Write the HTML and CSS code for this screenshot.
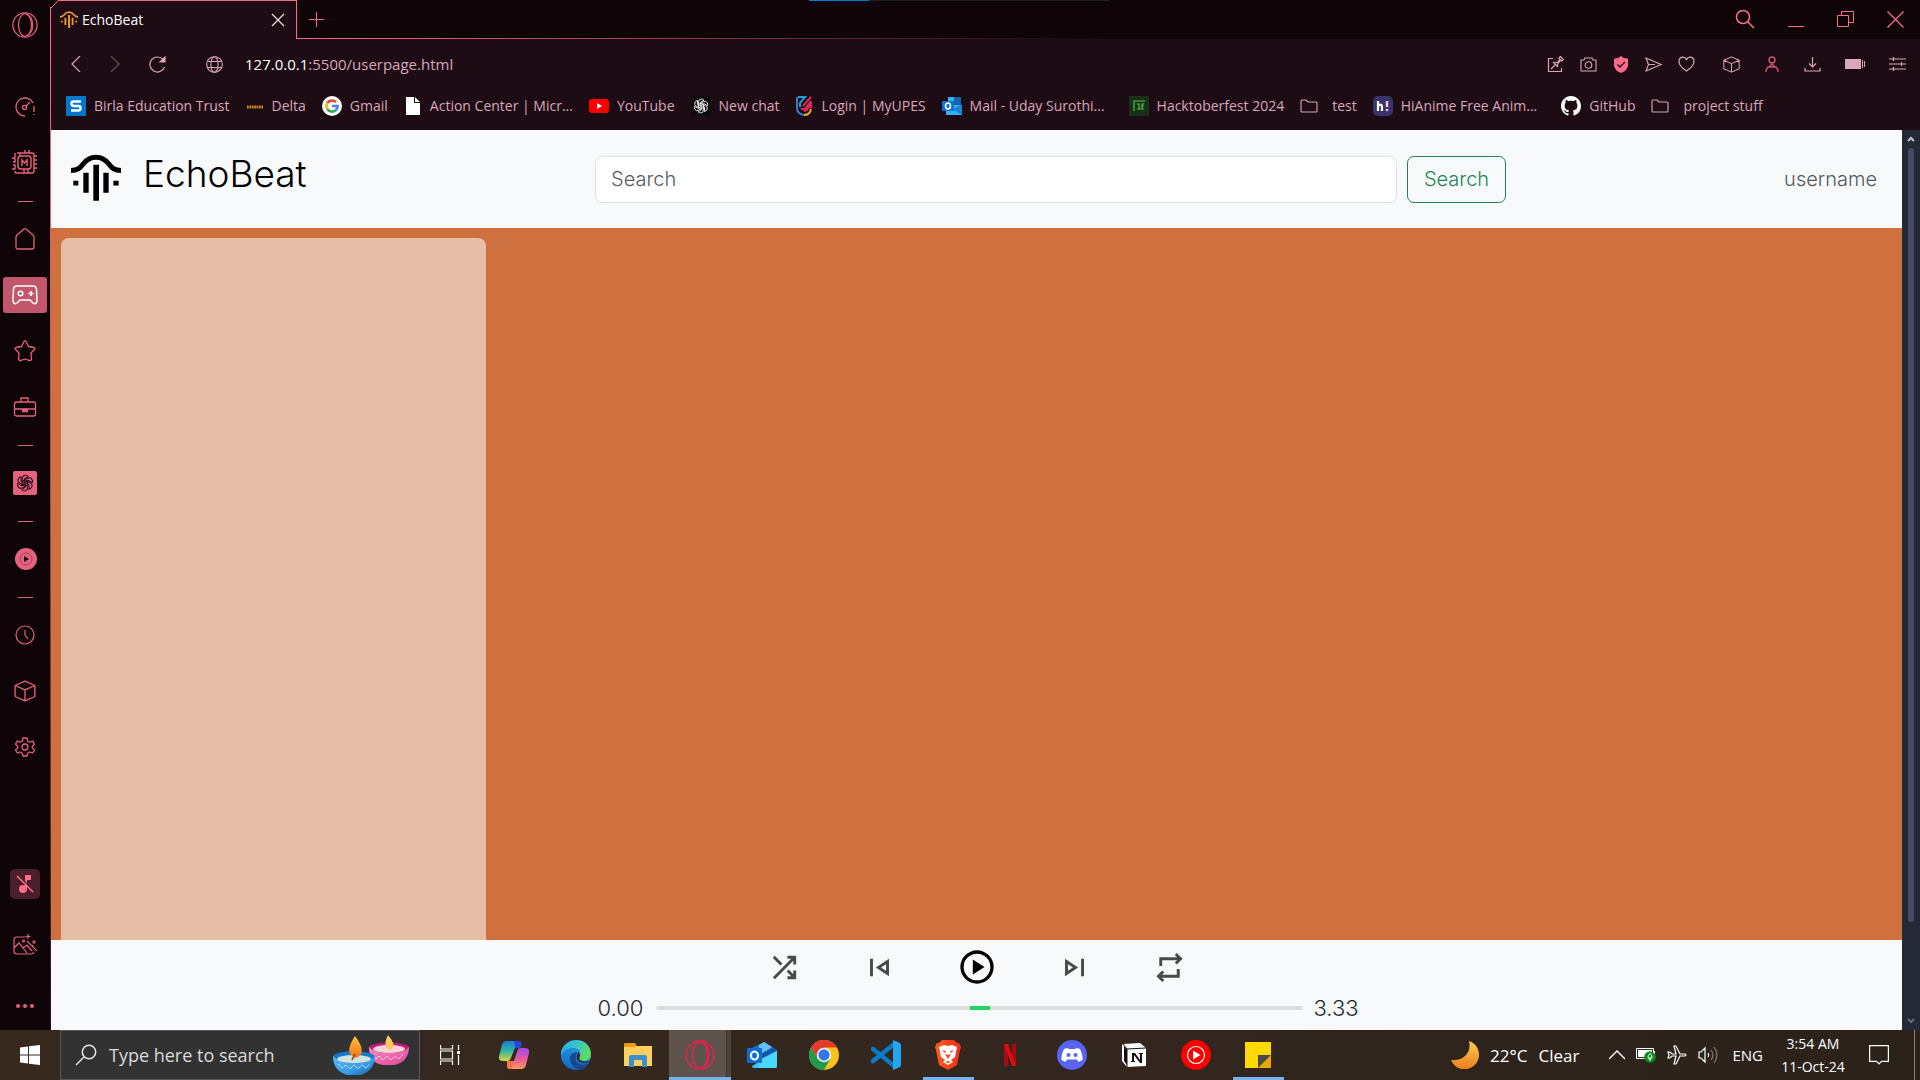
FILE: index.html
```html
<!DOCTYPE html>
<html lang="en">
<head>
<meta charset="utf-8">
<title>EchoBeat</title>
<link rel="stylesheet" href="styles.css">
</head>
<body>
<svg class="defs" width="0" height="0" aria-hidden="true">
  <defs>
    <symbol id="beat" viewBox="0 0 150 140"><path d="M0 49C20 49 28 41 37 29C47 15 58 9 75 9S103 15 113 29C122 41 130 49 150 49" fill="none" stroke="currentColor" stroke-width="15"/><path fill="currentColor" d="M67 32h17v108H67zM37 56h16v60H37zM97 56h16v60H97zM7 80h15v14H7zM127 80h16v14h-16z"/></symbol>
    <symbol id="opera" viewBox="0 0 30 30"><g fill="none" stroke="currentColor" stroke-width="1.4"><circle cx="15" cy="15" r="14"/><ellipse cx="15" cy="15" rx="7.500" ry="13"/><path d="M17 3C26 6 26 24 17 27"/></g></symbol>
    <symbol id="cube" viewBox="0 0 20 20"><path d="M10 1 19 5v10l-9 4-9-4V5zM1 5l9 4 9-4M10 9v10" fill="none" stroke="currentColor" stroke-width="1.2" stroke-linejoin="round"/></symbol>
    <symbol id="folder" viewBox="0 0 18 14"><path d="M1 2q0-1 1-1h4l2 2h8q1 0 1 1v8q0 1-1 1H2q-1 0-1-1z" fill="none" stroke="currentColor" stroke-width="1.1"/></symbol>
    <symbol id="gpt" viewBox="0 0 24 24"><g fill="none" stroke="currentColor" stroke-width="1.3"><path id="petal" d="M8.300 14V6Q8.300 1.500 12.500 1.500 15 1.500 16.500 3.300L11 6.500V12"/><use href="#petal" transform="rotate(60 12 12)"/><use href="#petal" transform="rotate(120 12 12)"/><use href="#petal" transform="rotate(180 12 12)"/><use href="#petal" transform="rotate(240 12 12)"/><use href="#petal" transform="rotate(300 12 12)"/></g></symbol>
    <linearGradient id="gFlame" x1="0" y1="0" x2="0" y2="1"><stop offset="0" stop-color="#ffc33a"/><stop offset="1" stop-color="#f6731d"/></linearGradient>
    <linearGradient id="gBlue" x1="0" y1="0" x2="1" y2="1"><stop offset="0" stop-color="#5bb8f5"/><stop offset=".6" stop-color="#3a9be8"/><stop offset="1" stop-color="#1a5e9e"/></linearGradient>
    <linearGradient id="gPink" x1="0" y1="0" x2="1" y2="1"><stop offset="0" stop-color="#ff8fcb"/><stop offset="1" stop-color="#e0428f"/></linearGradient>
    <linearGradient id="gCopA" x1="0" y1="0" x2="0" y2="1"><stop offset="0" stop-color="#1a7fe0"/><stop offset=".5" stop-color="#2fb5a0"/><stop offset="1" stop-color="#d6d83a"/></linearGradient>
    <linearGradient id="gCopB" x1="0" y1="0" x2="0" y2="1"><stop offset="0" stop-color="#a04af0"/><stop offset=".55" stop-color="#e85a9a"/><stop offset="1" stop-color="#ff9a5a"/></linearGradient>
    <linearGradient id="gEdgeTop" x1="0" y1="0" x2="1" y2=".4"><stop offset="0" stop-color="#2aa6e8"/><stop offset=".5" stop-color="#35c5cf"/><stop offset="1" stop-color="#5fdc5a"/></linearGradient>
    <linearGradient id="gEdge" x1="0" y1="0" x2="0" y2="1"><stop offset="0" stop-color="#2a9be6"/><stop offset="1" stop-color="#0d68c4"/></linearGradient>
    <linearGradient id="gMoon" x1="0" y1="0" x2="0" y2="1"><stop offset="0" stop-color="#f7cf52"/><stop offset="1" stop-color="#f07d1a"/></linearGradient>
    <linearGradient id="gBrave" x1="0" y1="0" x2="1" y2="0"><stop offset="0" stop-color="#ff5a1f"/><stop offset="1" stop-color="#f0301a"/></linearGradient>
  </defs>
</svg>

<div class="desktop">
  <nav class="rail" aria-label="Browser sidebar">
    <button class="rail-menu" aria-label="Opera menu"><svg width="26" height="26"><use href="#opera"/></svg></button>
    <div class="rail-group">
      <button class="rail-btn" aria-label="Speed dial"><svg width="22" height="22" viewBox="0 0 22 22" fill="none" stroke="currentColor" stroke-width="1.300"><path d="M11 20A9 9 0 1 1 19 7M20 10v6M20 18v1M12 10l4-4"/><circle cx="10.500" cy="11.500" r="2"/></svg></button>
      <button class="rail-btn" aria-label="GX Control"><svg width="26" height="26" viewBox="0 0 26 26" fill="none" stroke="currentColor" stroke-width="1.400"><path d="M5 3h15q2 0 2 2v16q0 2-2 2H4q-1 0-1-2M3 3v4M0 8h3v4H1M1 15h2v4H0M22 6h3M22 10h3M22 14h3M22 18h3M13 0v3M17 0v3M8 3v3M12 19v4M16 19v4"/><rect x="6" y="6" width="13" height="13" rx="3"/><path d="M10 16v-6l2.500 3 2.500-3v6"/></svg></button>
      <hr class="rail-rule">
      <button class="rail-btn" aria-label="Home"><svg width="20" height="22" viewBox="0 0 20 22" fill="none" stroke="currentColor" stroke-width="1.300"><path d="M1 9q0-1 1-2l7-6q1-.6 2 0l7 6q1 1 1 2v10q0 2-2 2H3q-2 0-2-2z"/></svg></button>
      <button class="rail-btn" aria-label="GX Corner"><span class="rail-tile"><svg width="26" height="20" viewBox="0 0 26 20" fill="none" stroke="currentColor" stroke-width="1.500"><path d="M5 1h16q3 0 3.500 3l.5 12q-1 4-4 2l-3-3H8l-3 3q-3 2-4-2L1.500 4Q2 1 5 1z"/><circle cx="8.500" cy="8.500" r="2.300"/><path d="M19 6v5M16.500 8.500h5"/></svg></span></button>
      <button class="rail-btn" aria-label="Bookmarks"><svg width="22" height="22" viewBox="0 0 22 22" fill="none" stroke="currentColor" stroke-width="1.300" stroke-linejoin="round"><path d="M10 1.500q1-1 2 0l2.500 5 5.500 1q1.500.8.500 2L17 13l.5 6q-.5 2-2.500 1.300L11 19l-4 1.300Q5 21 4.500 19L5 13 1.500 9.500q-1-1.200.5-2l5.500-1z"/></svg></button>
      <button class="rail-btn" aria-label="Workspaces"><svg width="24" height="20" viewBox="0 0 24 20" fill="none" stroke="currentColor" stroke-width="1.300"><rect x="1.500" y="5" width="21" height="14" rx="2"/><path d="M8 5V1h7v4M1.500 12h21"/><path fill="currentColor" d="M9.500 12.500h5v2h-5z"/></svg></button>
      <hr class="rail-rule">
      <button class="rail-btn" aria-label="ChatGPT"><span class="rail-gpt"><svg width="18" height="18"><use href="#gpt"/></svg></span></button>
      <hr class="rail-rule">
      <button class="rail-btn" aria-label="Player"><svg width="24" height="24" viewBox="0 0 24 24"><circle cx="13" cy="12" r="11" fill="currentColor"/><circle cx="13" cy="12" r="6" fill="none" stroke="#a83c55"/><path d="M11 9l5 3-5 3z" fill="#14060c"/></svg></button>
      <hr class="rail-rule">
      <button class="rail-btn" aria-label="History"><svg width="20" height="20" viewBox="0 0 20 20" fill="none" stroke="currentColor" stroke-width="1.200"><circle cx="10" cy="10" r="9"/><path d="M10 5v5l3 4"/></svg></button>
      <button class="rail-btn" aria-label="Extensions"><svg width="22" height="22"><use href="#cube"/></svg></button>
      <button class="rail-btn" aria-label="Settings"><svg width="20" height="22" viewBox="0 0 20 22" fill="none" stroke="currentColor" stroke-width="1.300" stroke-linejoin="round"><path d="M8 2h4l.7 3 2 1.200 3-1 1.800 3L17.300 10.300v1.600l2.200 2.100-1.800 3-3-1-2 1.200L12 20H8l-.7-2.800-2-1.200-3 1L.5 14l2.200-2.100v-1.600L.5 8.200l1.800-3 3 1 2-1.200z"/><circle cx="10" cy="11" r="3"/></svg></button>
    </div>
    <div class="rail-foot">
      <button class="rail-low" aria-label="Mute music"><span class="rail-mute"><svg width="20" height="20" viewBox="0 0 20 20"><circle cx="8" cy="15" r="4" fill="currentColor"/><path d="M10 1h6v5h-4v9h-2z" fill="currentColor"/><path d="M3 1l16 16" stroke="#4b1e2c" stroke-width="1.500"/><path d="M2 2l16 16" stroke="currentColor" stroke-width="1.600"/></svg></span></button>
      <button class="rail-low" aria-label="Wallpaper"><svg width="24" height="22" viewBox="0 0 24 22" fill="none" stroke="currentColor" stroke-width="1.200"><path d="M12 3H4Q1 3 1 6v11q0 3 3 3h14q2 0 3-2M20 13v-2M1 14l5-5 8 10M10 14l4-3 5 6M14 7l10 10M15 0v5M12.500 2.500h5M21 6v4M19 8h4"/><circle cx="10.500" cy="7" r="1"/></svg></button>
      <button class="rail-low" aria-label="More"><svg width="20" height="6" viewBox="0 0 20 6" fill="currentColor"><circle cx="3" cy="3" r="2"/><circle cx="10" cy="3" r="2"/><circle cx="17" cy="3" r="2"/></svg></button>
    </div>
  </nav>

  <div class="window">
    <div class="tabstrip">
      <div class="tab">
        <svg class="tab-logo" width="18" height="17"><use href="#beat"/></svg>
        <span class="tab-title">EchoBeat</span>
        <button class="tab-close" aria-label="Close tab"><svg width="14" height="14" viewBox="0 0 14 14" stroke="currentColor" stroke-width="1.200"><path d="M1 1l12 12M13 1 1 13"/></svg></button>
      </div>
      <div class="strip-rest">
        <button class="new-tab" aria-label="New tab"><svg width="16" height="16" viewBox="0 0 16 16" stroke="currentColor"><path d="M7.500 0v15M0 7.500h15"/></svg></button>
        <div class="strip-progress"></div>
        <div class="win-controls">
          <button aria-label="Search tabs"><svg width="20" height="20" viewBox="0 0 20 20" fill="none" stroke="currentColor" stroke-width="1.500"><circle cx="8" cy="7" r="6.500"/><path d="M12.500 11.500 19 18"/></svg></button>
          <button aria-label="Minimise"><svg width="16" height="16" viewBox="0 0 16 16" stroke="currentColor"><path d="M0 14.500h16"/></svg></button>
          <button aria-label="Restore"><svg width="17" height="17" viewBox="0 0 17 17" fill="none" stroke="currentColor"><path d="M.5 4.500h11v11H.500zM4.500 4V.5h12v11H12"/></svg></button>
          <button aria-label="Close"><svg width="17" height="17" viewBox="0 0 17 17" stroke="currentColor" stroke-width="1.200"><path d="M.5.500l16 16M16.500.500l-16 16"/></svg></button>
        </div>
      </div>
    </div>

    <div class="toolbar">
      <div class="nav-btns">
        <button aria-label="Back"><svg width="10" height="16" viewBox="0 0 10 16" fill="none" stroke="currentColor" stroke-width="1.200"><path d="M9 0 1 8l8 8"/></svg></button>
        <button aria-label="Forward" class="dim"><svg width="10" height="16" viewBox="0 0 10 16" fill="none" stroke="currentColor" stroke-width="1.200"><path d="M1 0l8 8-8 8"/></svg></button>
        <button aria-label="Reload"><svg width="17" height="17" viewBox="0 0 17 17" fill="none" stroke="currentColor" stroke-width="1.200"><path d="M15.500 11A7.500 7.500 0 1 1 14 3.500"/><path d="M16 1v5h-5z" fill="currentColor"/></svg></button>
      </div>
      <button class="globe" aria-label="Site information"><svg width="17" height="17" viewBox="0 0 17 17" fill="none" stroke="currentColor" stroke-width="1.100"><circle cx="8.500" cy="8.500" r="7.800"/><ellipse cx="8.500" cy="8.500" rx="3.600" ry="7.800"/><path d="M1.500 5.500h14M1.500 11.500h14"/></svg></button>
      <div class="address"><b>127.0.0.1</b>:5500/userpage.html</div>
      <div class="tools">
        <button aria-label="Edit page"><svg width="17" height="17" viewBox="0 0 17 17" fill="none" stroke="currentColor" stroke-width="1.200"><path d="M6 2.500H1.500v13h13V12M4 13l4-4M6 6l5 5M7 7l4-1 2-3-1-1 1.500-1.500 3 3L15 5l-1-1-3 3-1 4"/></svg></button>
        <button aria-label="Snapshot"><svg width="17" height="15" viewBox="0 0 17 15" fill="none" stroke="currentColor" stroke-width="1.100"><path d="M1 3h3l1-2h7l1 2h3v11H1z"/><circle cx="8.500" cy="8" r="3.300"/></svg></button>
        <button class="hot" aria-label="Ad blocker"><svg width="16" height="17" viewBox="0 0 16 17"><path d="M1 2.500Q5 3 8 0q3 3 7 2.500V9q0 5-7 8-7-3-7-8z" fill="currentColor"/><path d="M4.500 8.500 7 11l5-5" fill="none" stroke="#1e0c14" stroke-width="1.400"/></svg></button>
        <button aria-label="Send"><svg width="17" height="15" viewBox="0 0 17 15" fill="none" stroke="currentColor" stroke-width="1.100"><path d="M1 1l15 6.500L1 14l2.500-6.500zM3.500 7.500H10"/></svg></button>
        <button aria-label="Favourite"><svg width="17" height="16" viewBox="0 0 17 16" fill="none" stroke="currentColor" stroke-width="1.200"><path d="M8.500 15Q1 10 1 5.500C1 0 7 0 8.500 3.500 10 0 16 0 16 5.500 16 10 8.500 15 8.500 15z"/></svg></button>
        <span class="tools-right">
          <button aria-label="Extensions"><svg width="17" height="17"><use href="#cube"/></svg></button>
          <button class="rose" aria-label="Profile"><svg width="16" height="16" viewBox="0 0 16 16" fill="none" stroke="currentColor" stroke-width="1.400"><circle cx="8" cy="4" r="3"/><path d="M2 16v-2l2-3h8l2 3v2M5 11l3-3 3 3"/></svg></button>
          <button aria-label="Downloads"><svg width="17" height="16" viewBox="0 0 17 16" fill="none" stroke="currentColor" stroke-width="1.200"><path d="M8.500 1v10M5 7.500 8.500 11 12 7.500M1 12v3h15v-3"/></svg></button>
          <button aria-label="Battery saver"><svg width="20" height="12" viewBox="0 0 20 12" fill="currentColor"><path d="M0 1h16v10H0zM17 2h1v8h-1zM19 3h1v6h-1z"/></svg></button>
          <button aria-label="Easy setup"><svg width="17" height="16" viewBox="0 0 17 16" stroke="currentColor" stroke-width="1.200"><path d="M0 3h17M0 8h17M0 13h17M4.500 1v4M12.500 6v4M4.500 11v4"/></svg></button>
        </span>
      </div>
    </div>

    <nav class="bookmarks" aria-label="Bookmarks bar">
      <a href="#"><svg width="20" height="20" viewBox="0 0 20 20"><path fill="#0077c8" d="M0 0h20v20H0z"/><path d="M15 5.500H7.500q-2 0-2 2T7.500 10h5q2 0 2 2.200t-2 2.300H5" fill="none" stroke="#fff" stroke-width="2.400"/></svg>Birla Education Trust</a>
      <a href="#"><svg width="18" height="20" viewBox="0 0 18 20"><path d="M1 11h16" fill="none" stroke="#c98a12" stroke-width="3" stroke-dasharray="1.700 .7"/></svg>Delta</a>
      <a href="#"><svg width="20" height="20" viewBox="0 0 20 20" fill="none" stroke-width="2.600"><circle cx="10" cy="10" r="10" fill="#fff"/><path d="M14 6.200A5.600 5.600 0 0 0 5.200 7.200" stroke="#ea4335"/><path d="M5.200 7.200a5.600 5.600 0 0 0 0 5.600" stroke="#fbbc05"/><path d="M5.200 12.800a5.600 5.600 0 0 0 8.500 1.400" stroke="#34a853"/><path d="M13.700 14.200Q15.600 12.500 15.600 10H10" stroke="#4285f4"/></svg>Gmail</a>
      <a href="#"><svg width="18" height="20" viewBox="0 0 18 20"><path fill="#fff" d="M2 1h8v6h6v12H2zM11 1l5 5h-5z"/></svg>Action Center | Micr...</a>
      <a href="#"><svg width="20" height="20" viewBox="0 0 20 20"><rect y="3" width="20" height="14" rx="3" fill="#f00"/><path d="M8 7l5 3-5 3z" fill="#fff"/></svg>YouTube</a>
      <a href="#"><svg class="chat-icon" width="20" height="20" viewBox="0 0 20 20"><rect width="20" height="20" rx="3" fill="#0c0c0c"/><use href="#gpt" x="2" y="2" width="16" height="16"/></svg>New chat</a>
      <a href="#"><svg width="18" height="20" viewBox="0 0 18 20" fill="none" stroke-width="2"><path d="M2 1v11q0 6 7 7" stroke="#2a7fd4"/><path d="M9 19q6 0 7-6" stroke="#f2b01e"/><path d="M16 12V8l-4 6-3 1M16 5l-6 8-4 0M16 1 8 10" stroke="#e0285a"/><path d="M3 1h7L5 7v4" stroke="#1f9fd8"/></svg>Login | MyUPES</a>
      <a href="#"><svg width="20" height="20" viewBox="0 0 20 20"><path fill="#1066b5" d="M6 1h13v8H6z"/><path fill="#35b1f1" d="M6 1h6v7H6zM4 9h16v10H4z"/><path fill="#1685d3" d="M20 9v10L10 13z"/><path fill="#0a72cf" d="M0 5h12v10H0z"/><ellipse cx="6" cy="10" rx="2.500" ry="3" fill="none" stroke="#fff" stroke-width="1.600"/></svg>Mail - Uday Surothi...</a>
      <a href="#" class="after-long"><svg width="20" height="20" viewBox="0 0 20 20"><path fill="#18301a" d="M0 0h20v20H0z"/><path d="M5 15V5h11M8 8h2v5M8 13h4M15 8h-2v5h2M12 10h3" fill="none" stroke="#4cc24a" stroke-width="1.200"/></svg>Hacktoberfest 2024</a>
      <a href="#" class="dir"><svg width="18" height="14"><use href="#folder"/></svg>test</a>
      <a href="#"><svg width="20" height="20" viewBox="0 0 20 20"><rect width="20" height="20" rx="5" fill="#37356a"/><path d="M5 5v10M5 10q4-3 4 1v4" fill="none" stroke="#fff" stroke-width="2.200"/><path d="M14 5v6M14 13v2" stroke="#ffc0e6" stroke-width="2.400"/></svg>HiAnime Free Anim...</a>
      <a href="#" class="after-long"><svg width="20" height="20" viewBox="0 0 16 16"><path fill="#fff" d="M8 0C3.580 0 0 3.580 0 8c0 3.540 2.290 6.530 5.470 7.590.4.070.55-.17.55-.38 0-.19-.01-.82-.01-1.490-2.010.37-2.530-.49-2.690-.94-.09-.23-.48-.94-.82-1.130-.28-.15-.68-.52-.01-.53.63-.01 1.080.58 1.230.82.72 1.210 1.870.87 2.330.66.070-.52.28-.87.51-1.070-1.780-.2-3.640-.89-3.640-3.950 0-.87.31-1.590.82-2.150-.08-.2-.36-1.020.08-2.120 0 0 .67-.21 2.200.82.64-.18 1.320-.27 2-.27s1.360.09 2 .27c1.530-1.040 2.200-.82 2.200-.82.44 1.100.16 1.920.08 2.120.51.56.82 1.270.82 2.150 0 3.070-1.870 3.750-3.650 3.950.29.25.54.73.54 1.480 0 1.070-.01 1.930-.01 2.200 0 .21.15.46.55.38A8.010 8.010 0 0 0 16 8c0-4.420-3.580-8-8-8z"/></svg>GitHub</a>
      <a href="#" class="dir"><svg width="18" height="14"><use href="#folder"/></svg>project stuff</a>
    </nav>

    <div class="viewport">
      <div class="page">
        <header class="site-header">
          <a class="brand" href="#"><svg width="50" height="47"><use href="#beat"/></svg><span>EchoBeat</span></a>
          <form class="search" role="search">
            <input type="search" placeholder="Search" aria-label="Search">
            <button type="button">Search</button>
          </form>
          <a class="user" href="#">username</a>
        </header>
        <main class="stage"><aside class="library" aria-label="Library"></aside></main>
        <footer class="player">
          <div class="controls">
            <button aria-label="Shuffle"><svg width="35" height="35" viewBox="0 -960 960 960"><path d="M560-160v-80h104L537-367l57-57 126 126v-102h80v240H560Zm-344 0-56-56 504-504H560v-80h240v240h-80v-104L216-160Zm151-377L160-744l56-56 207 207-56 56Z"/></svg></button>
            <button aria-label="Previous"><svg width="35" height="35" viewBox="0 -960 960 960"><path d="M220-240v-480h80v480h-80Zm520 0L380-480l360-240v480Zm-80-240Zm0 90v-180l-136 90 136 90Z"/></svg></button>
            <button class="play" aria-label="Play"><svg width="40" height="40" viewBox="0 -960 960 960"><path d="m380-300 280-180-280-180v360ZM480-80q-83 0-156-31.500T197-197q-54-54-85.500-127T80-480q0-83 31.500-156T197-763q54-54 127-85.500T480-880q83 0 156 31.500T763-763q54 54 85.500 127T880-480q0 83-31.500 156T763-197q-54 54-127 85.500T480-80Zm0-80q134 0 227-93t93-227q0-134-93-227t-227-93q-134 0-227 93t-93 227q0 134 93 227t227 93Z"/></svg></button>
            <button aria-label="Next"><svg width="35" height="35" viewBox="0 -960 960 960"><path d="M660-240v-480h80v480h-80Zm-440 0v-480l360 240-360 240Zm80-240Zm0 90 136-90-136-90v180Z"/></svg></button>
            <button aria-label="Repeat"><svg width="35" height="35" viewBox="0 -960 960 960"><path d="M280-80 120-240l160-160 56 58-62 62h406v-160h80v240H274l62 62-56 58Zm-80-440v-240h486l-62-62 56-58 160 160-160 160-56-58 62-62H280v160h-80Z"/></svg></button>
          </div>
          <div class="timeline">
            <span class="elapsed">0.00</span>
            <input type="range" min="0" max="100" value="50" aria-label="Seek">
            <span class="total">3.33</span>
          </div>
        </footer>
      </div>
      <div class="scrollbar" aria-hidden="true">
        <svg width="8" height="8" viewBox="0 0 8 8" fill="none" stroke="#c4c6cc" stroke-width="2"><path d="M1 6l3-3 3 3"/></svg>
        <div class="thumb"></div>
        <svg width="8" height="8" viewBox="0 0 8 8" fill="none" stroke="#6a6d72" stroke-width="2"><path d="M1 2l3 3 3-3"/></svg>
      </div>
    </div>
  </div>
</div>

<div class="taskbar">
  <button class="start" aria-label="Start"><svg width="20" height="20" viewBox="0 0 20 20" fill="#fff"><path d="M0 2.500 8 1.400V9.500H0zM9 1.200 20 0v9.500H9zM0 10.500h8v8.100L0 17.500zM9 10.500h11V20L9 18.800z"/></svg></button>
  <label class="task-search">
    <svg width="22" height="22" viewBox="0 0 22 22" fill="none" stroke="#e6e6e6" stroke-width="1.500"><circle cx="14" cy="8" r="6.700"/><path d="M9 13l-8 8"/></svg>
    <input type="text" placeholder="Type here to search" aria-label="Type here to search">
    <svg width="76" height="44" viewBox="0 0 76 44">
      <ellipse cx="56" cy="14.500" rx="20" ry="5" fill="#c2187a"/><path d="M36 14q0 16 14 18h12q14-4 14-18-4 6-20 6T36 14z" fill="url(#gPink)"/><ellipse cx="56" cy="16" rx="16" ry="4" fill="#f8d3dc"/><path d="M55 2q10 12 2 15-8-3-2-15z" fill="#ffc65a"/><path d="M40 22l3 4 3-3 4 4 4-4 4 4 4-4 4 3 4-5" fill="none" stroke="#ffe3f2" stroke-dasharray="3 1"/>
      <ellipse cx="21" cy="24" rx="21" ry="6" fill="#1678c8"/><path d="M0 23q0 15 14 19h14q14-5 14-19-5 7-21 7T0 23z" fill="url(#gBlue)"/><ellipse cx="21" cy="26" rx="17" ry="4" fill="#cfe6e0"/><path d="M22 3q13 17 1 22-13-4-1-22z" fill="url(#gFlame)"/><path d="M22 21l-3 6" stroke="#7a4324" stroke-width="1.500"/><path d="M5 31l4 4 4-3 4 4 4-4 4 4 4-4 4 3 4-4" fill="none" stroke="#d3efff" stroke-dasharray="3 1"/>
    </svg>
  </label>
  <button class="view" aria-label="Task view"><svg width="20" height="20" viewBox="0 0 20 20" fill="none" stroke="#fff" stroke-width="1.200"><path d="M.5 0v4h12V0M.5 20v-4h12v4M.5 6h12v8H.500zM18.500 0v5M18.500 10v10"/><path d="M17 6h3v3h-3z" fill="#fff" stroke="none"/></svg></button>
  <div class="apps">
    <button aria-label="Copilot"><svg width="30" height="28" viewBox="0 0 30 28"><path d="M8 0h12q3 0 2 4l-1 3h-5L12 17q-1 3-4 3H4q-5 0-4-5L3 4Q4 0 8 0z" fill="url(#gCopA)"/><path d="M15 0h5q3 0 2 4l-1 3h-5z" fill="#2348d8"/><path d="M22 28H11q-3 0-3-4l0-4h5l4-9q1-4 5-4h4q5 0 4 5l-3 12q-1 4-5 4z" fill="url(#gCopB)"/><path d="M8 20h6l-1 8h-2q-3 0-3-4z" fill="#ff7345"/><path d="M16 8h3l-4 12h-4z" fill="#342820"/></svg></button>
    <button aria-label="Edge"><svg width="30" height="30" viewBox="0 0 30 30"><circle cx="15" cy="15" r="15" fill="url(#gEdge)"/><path d="M0 13C2-3 29-5 30 14q0 7-8 7-6-1-3-5 2-7-6-8Q4 7 0 15z" fill="url(#gEdgeTop)"/><path d="M16 12q-8 1-7 8 2 8 10 10 6-1 9-7-5 3-9 1-7-3-3-12z" fill="#134a8e"/><path d="M18 12q-3 2-2 7 4 6 12 3l2 2v-3q-4 1-9 0-4-1-2-5z" fill="#342820"/></svg></button>
    <button aria-label="File Explorer"><svg width="28" height="24" viewBox="0 0 28 24"><path fill="#e3a008" d="M0 1q0-1 1-1h10l2 3v5H0z"/><path fill="#ffd15c" d="M0 4h11l2-1h15v20H0z"/><path fill="#3b8fd0" d="M5 24V14q0-2 2-2h14q2 0 2 2v10h-5v-7H10v7z"/></svg></button>
    <button class="current" aria-label="Opera GX"><svg width="30" height="30"><use href="#opera"/></svg></button>
    <button aria-label="Outlook"><svg width="30" height="26" viewBox="0 0 30 26"><path fill="#1c6fd0" d="M5 6 17 0l13 8v10H5z"/><path fill="#5fc2f5" d="M12 3 17 0l8 5-13 8z"/><path fill="#1550a8" d="M12 13 27 6l3 2-16 9z"/><path fill="#36c5f5" d="M5 24 30 9v15q0 2-2 2H7q-2 0-2-2z"/><path fill="#4ad8fa" d="M12 18l18-9v15q0 2-2 2H12z"/><rect y="6" width="15" height="15" rx="1" fill="#0f6cd4"/><ellipse cx="7.500" cy="13.500" rx="3.500" ry="4" fill="none" stroke="#fff" stroke-width="2.200"/></svg></button>
    <button aria-label="Chrome"><svg width="30" height="30" viewBox="0 0 30 30"><circle cx="15" cy="15" r="15" fill="#fbc116"/><path d="M2 7.500A15 15 0 0 1 28 7.500H15L9 19z" fill="#e33b2e"/><path d="M2 7.500A15 15 0 0 0 15 30l6.500-11.500L9 19z" fill="#229a4b"/><circle cx="15" cy="15" r="7.200" fill="#fff"/><circle cx="15" cy="15" r="5.700" fill="#3478e8"/></svg></button>
    <button aria-label="Visual Studio Code"><svg width="30" height="30" viewBox="0 0 30 30"><path d="M2 9 22 25M2 21 22 5" stroke="#0b7bc9" stroke-width="4.500" stroke-linecap="round"/><path fill="#27a4ee" d="M22 0l7 3q1 1 1 2v20q0 1-1 2l-7 3z"/></svg></button>
    <button class="running" aria-label="Brave"><svg width="26" height="30" viewBox="0 0 26 30"><path d="M7 0h12l3 3 2 0 2 4-1 3-3 15-9 5-9-5L1 10 0 7l2-4h2z" fill="url(#gBrave)"/><path d="M4 7l5-2 4 1 4-1 5 2-1 5-1 5-4 3 2 2-5 3-5-3 2-2-4-3-1-5z" fill="#fff"/><path d="M7 10l4 1-1 2zM19 10l-4 1 1 2zM10 14l3 5 3-5-3 1zM10 22l3-1 3 1-3 1z" fill="#f4431d"/></svg></button>
    <button aria-label="Netflix"><svg width="12" height="22" viewBox="0 0 12 22"><path fill="#a50d14" d="M0 0h4v22H0zM8 0h4v22H8z"/><path fill="#e50914" d="M0 0h4l8 22H8z"/></svg></button>
    <button aria-label="Discord"><svg width="30" height="30" viewBox="0 0 30 30"><circle cx="15" cy="15" r="15" fill="#5865f2"/><path d="M10 8l2 1h6l2-1 3 1q3 6 2.500 11l-4 2-1.500-2.500h-10L8.500 22l-4-2Q4 15 7 9z" fill="#fff"/><circle cx="11.500" cy="15" r="2" fill="#5865f2"/><circle cx="18.500" cy="15" r="2" fill="#5865f2"/></svg></button>
    <button aria-label="Notion"><svg width="26" height="26" viewBox="0 0 26 26"><path d="M2 2 19 1l6 5v18L6 25l-5-6V3z" fill="#fff"/><path d="M3 4l3 4v15l-3-4z" fill="#111"/><path d="M2 2l4 5 19-1M6 7v18" fill="none" stroke="#111"/><path d="M8 9l15-1v14L8 23z" fill="#fff"/><path d="M10 11h4l5 7v-6h-1v-1h4v1h-1v9h-2l-6-8v6h1v1h-4v-1h1v-8h-1z" fill="#111"/></svg></button>
    <button aria-label="YouTube Music"><svg width="30" height="30" viewBox="0 0 30 30"><circle cx="15" cy="15" r="15" fill="#f00"/><circle cx="15" cy="15" r="8.500" fill="none" stroke="#fff" stroke-width="1.200"/><path d="M12 10.500l7.500 4.500-7.500 4.500z" fill="#fff"/></svg></button>
    <button class="running" aria-label="Sticky Notes"><svg width="26" height="26" viewBox="0 0 26 26"><path fill="#ffd900" d="M0 0h26v26H0z"/><path fill="#e8a800" d="M26 13v13H13z"/><path fill="#4a4a44" d="M13 13h13L13 26z"/></svg></button>
  </div>
  <div class="tray">
    <button class="weather"><svg width="28" height="28" viewBox="0 0 28 28"><path d="M18 0a14.500 14.500 0 1 1-18 19Q10 20 15 14T18 0z" fill="url(#gMoon)"/></svg><span>22°C</span><span>Clear</span></button>
    <div class="status">
      <svg width="16" height="10" viewBox="0 0 16 10" fill="none" stroke="#fff" stroke-width="1.300"><path d="M0 9l8-8 8 8"/></svg>
      <svg width="20" height="16" viewBox="0 0 20 16"><path d="M.5 1.500h17v10H.500z" fill="none" stroke="#fff"/><path d="M2 3h14v7H2zM18 4h1v4h-1z" fill="#fff"/><circle cx="14" cy="10" r="5.800" fill="#0b8a1f"/><path d="M14 6.500q4 4 0 6-4-2 0-6zM14 10v4" fill="none" stroke="#fff"/></svg>
      <svg width="20" height="20" viewBox="0 0 20 20" fill="none" stroke="#fff" stroke-width="1.200"><path d="M1 7h2l2 2h4L7 1h2l4 8h5q2 1 0 2h-5l-4 8H7l2-8H5l-2 2H1l1-3z"/></svg>
      <svg width="20" height="18" viewBox="0 0 20 18" fill="none" stroke="#fff" stroke-width="1.200"><path d="M1 6h2l4-4v14l-4-4H1zM10 7q1.500 2 0 4"/><path d="M13 4q4 5 0 10M16 1q6 8 0 16" stroke="#857d77"/></svg>
      <span class="lang">ENG</span>
    </div>
    <div class="clock"><time>3:54 AM</time><span>11-Oct-24</span></div>
    <button class="notify" aria-label="Notifications"><svg width="20" height="20" viewBox="0 0 20 20" fill="none" stroke="#fff" stroke-width="1.200"><path d="M.6.600h18.800v15.800H12.500L10 19l-2.500-2.600H.6z"/></svg></button>
  </div>
</div>
</body>
</html>
```

FILE: styles.css
```css
:root {
  --ink: #0f0408;
  --chrome: #1e0c14;
  --pink: #ff6b88;
  --rose: #e5627e;
  --mauve: #d9a6bc;
  --paper: #f8f9fb;
  --orange: #cf703f;
  --ui: "Open Sans", "Noto Sans", sans-serif;
  --site: "Inter", "Liberation Sans", sans-serif;
}
* { box-sizing: border-box; }
body {
  margin: 0;
  min-height: 100vh;
  display: flex;
  flex-direction: column;
  background: var(--ink);
  font-family: var(--ui);
}
button {
  margin: 0;
  padding: 0;
  border: 0;
  background: none;
  color: inherit;
  font: inherit;
  display: flex;
  align-items: center;
  justify-content: center;
}
a { color: inherit; text-decoration: none; }
svg { display: block; flex: none; }
.defs { position: absolute; }
.desktop { flex: 1; display: flex; }

/* Browser side rail */
.rail {
  width: 51px;
  display: flex;
  flex-direction: column;
  color: var(--rose);
  border-right: 1px solid;
  border-image: linear-gradient(to bottom, transparent 8px, var(--pink) 8px, #e0607a 20%, #5c2736 80%, #2c1019) 1;
  border-width: 0 1px 0 0;
}
.rail-menu { height: 50px; }
.rail-group { display: flex; flex-direction: column; margin-top: 29px; }
.rail-btn { height: 56px; }
.rail-rule { width: 15px; height: 20px; margin: 0 auto; border: 0; background: linear-gradient(var(--rose), var(--rose)) center / 15px 1px no-repeat; }
.rail-tile { display: flex; align-items: center; justify-content: center; width: 44px; height: 36px; border-radius: 3px; background: #c2566c; color: #fff; }
.rail-gpt { display: flex; align-items: center; justify-content: center; width: 24px; height: 24px; border-radius: 2px; background: var(--rose); color: #14060c; }
.rail-foot { margin-top: auto; display: flex; flex-direction: column; gap: 13px; }
.rail-low { height: 48px; }
.rail-mute { display: flex; align-items: center; justify-content: center; width: 30px; height: 30px; border-radius: 5px; background: #4b1e2c; color: var(--pink); }

.window { flex: 1; min-width: 0; display: flex; flex-direction: column; background: var(--chrome); }

/* Tab strip */
.tabstrip { display: flex; height: 39px; background: var(--ink); color: var(--pink); }
.tab {
  width: 246px;
  display: flex;
  align-items: center;
  padding: 0 12px 0 9px;
  background:
    linear-gradient(135deg, var(--ink) 5px, var(--pink) 5px, var(--pink) 6px, transparent 6px),
    linear-gradient(var(--pink), var(--pink)) top / 100% 1px no-repeat,
    linear-gradient(var(--pink), var(--pink)) right / 1px 100% no-repeat,
    var(--chrome);
}
.tab-logo { color: #e8962e; }
.tab-title { flex: 1; margin-left: 4px; font-size: 14px; color: #fff; }
.tab-close { color: #f0dce4; }
.strip-rest {
  flex: 1;
  display: flex;
  align-items: center;
  background: linear-gradient(to right, var(--pink), transparent 50%) bottom / 100% 1px no-repeat;
}
.new-tab { margin-left: 12px; }
.strip-progress { width: 301px; height: 1px; margin: 0 auto auto 484px; background: linear-gradient(to right, #0078d4 60px, #202020 60px); }
.win-controls { display: flex; gap: 33px; margin-right: 16px; }

/* Address row */
.toolbar { display: flex; align-items: center; height: 50px; padding-right: 14px; color: var(--mauve); }
.nav-btns { display: flex; gap: 29px; padding-left: 20px; }
.dim { opacity: .4; }
.globe { margin-left: 40px; }
.address { margin-left: 22px; font-size: 15px; }
.address b { font-weight: 400; color: #fff; }
.tools { display: flex; gap: 16px; margin-left: auto; align-items: center; }
.tools-right { display: flex; align-items: center; gap: 24px; margin-left: 12px; }
.hot { color: var(--pink); }
.rose { color: #cc5570; }

/* Bookmarks */
.bookmarks { display: flex; gap: 16px; align-items: center; height: 41px; padding: 0 0 8px 15px; color: var(--mauve); font-size: 14px; white-space: nowrap; overflow: hidden; }
.bookmarks a { display: flex; align-items: center; gap: 8px; }
.bookmarks .after-long { margin-left: 8px; }
.bookmarks .dir { gap: 14px; }
.chat-icon { color: #f2f2f2; }

/* Web page */
.viewport { flex: 1; display: flex; }
.page { flex: 1; min-width: 0; display: flex; flex-direction: column; background: var(--orange); font-family: var(--site); font-weight: 300; font-size: 20px; color: #212529; }
.site-header { display: flex; align-items: center; height: 98px; padding: 0 25px 0 20px; background: var(--paper); }
.brand { display: flex; align-items: flex-start; gap: 22px; width: 524px; padding-bottom: 4px; font-size: 37px; line-height: 40px; color: #000; }
.search { display: flex; gap: 10px; width: 911px; }
.search input { flex: 1; min-width: 0; height: 47px; padding: 0 15px; border: 1px solid #dee2e6; border-radius: 7px; background: #fff; font: inherit; color: inherit; outline: 0; }
.search input::placeholder { color: #595c5f; opacity: 1; }
.search button { width: 99px; height: 47px; border: 1px solid #198754; border-radius: 7px; color: #198754; }
.user { margin-left: auto; color: #55585b; }
.stage { flex: 1; display: flex; padding: 10px 10px 0; }
.library { width: 425px; border-radius: 8px 8px 0 0; background: #e6bda7; }
.player { display: flex; flex-direction: column; align-items: center; height: 90px; padding-top: 7px; background: var(--paper); }
.controls { display: flex; align-items: center; gap: 60px; height: 40px; color: #000; }
.controls button { opacity: .7; }
.controls .play { opacity: 1; }
.controls svg { fill: currentColor; }
.timeline { display: flex; align-items: center; justify-content: center; gap: 10px; width: 100%; height: 42px; font-size: 22px; }
.elapsed { width: 48px; }
.total { width: 42px; }
.timeline input { -webkit-appearance: none; appearance: none; width: 35%; height: 4px; margin: 0; border-radius: 2px; background: #dcdcdc; }
.timeline input::-webkit-slider-thumb { -webkit-appearance: none; width: 20px; height: 4px; background: #1ed760; }

.scrollbar { width: 18px; display: flex; flex-direction: column; align-items: center; padding: 5px 0; background: #232936; }
.thumb { width: 6px; flex: 0 0 87%; margin: 5px 0 auto; border-radius: 3px; background: #474b66; }

/* Desktop taskbar */
.taskbar { display: flex; height: 50px; background: linear-gradient(to right, #38291f, #32261e 60%, #2b221a); color: #fff; }
.start { width: 60px; }
.task-search { display: flex; align-items: center; width: 360px; padding: 0 10px 0 14px; border: 1px solid #5c5754; background: #323232; }
.task-search input { flex: 1; min-width: 0; margin-left: 12px; padding: 0; border: 0; background: none; outline: 0; color: #fff; font-family: inherit; font-size: 18px; }
.task-search input::placeholder { color: #dadada; opacity: 1; }
.view { width: 60px; }
.apps { display: flex; margin-left: 3px; }
.apps button { width: 62px; }
.apps .running { background: linear-gradient(#76b3ec, #76b3ec) bottom / 51px 3px no-repeat; }
.apps .current {
  color: #e8204a;
  background:
    linear-gradient(#76b3ec, #76b3ec) bottom / 100% 3px no-repeat,
    linear-gradient(to right, transparent 57px, #3f342e 57px, #3f342e 58px, #4d433d 58px),
    #5d524c;
}
.tray { display: flex; align-items: center; margin-left: auto; padding-right: 5px; font-size: 17px; }
.weather { gap: 11px; }
.status { display: flex; align-items: center; gap: 11px; margin-left: 30px; }
.lang { margin-left: 3px; font-size: 15px; }
.clock { display: flex; flex-direction: column; align-items: center; width: 100px; font-size: 14px; line-height: 23px; }
.notify { padding: 0 25px 0 6px; border-right: 1px solid #8a837e; height: 50px; }
```
